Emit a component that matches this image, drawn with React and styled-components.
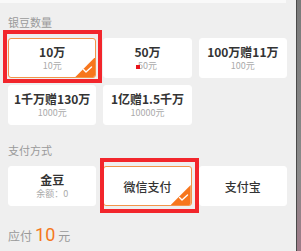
import styled, { createGlobalStyle } from "styled-components"

const GlobalStyle = createGlobalStyle`
  html, body {
    margin: 0;
    padding: 0;
    background: #efefef;
    font-family: "Noto Sans CJK SC", "Noto Sans", sans-serif;
  }
`

const Screen = styled.div`
  display: flex;
  width: 301px;
  height: 251px;
  overflow: hidden;
`
const Page = styled.div`
  width: 297px;
  background: #efefef;
  display: flex;
  flex-direction: column;
`
const Edge = styled.div`
  width: 4px;
  border-left: 1px solid #4a4a4a;
  background: linear-gradient(#7a7a7a, #8a8a8a 70%, #a07a88);
`
const TopCard = styled.div`
  height: 3px;
  margin-right: 10px;
  background: #f9f9f9;
`
const Label = styled.div`
  padding-left: 8px;
  margin-top: ${p => p.top}px;
  font-size: 11px;
  line-height: 14px;
  color: #9a9a9a;
`
const Grid = styled.div`
  display: grid;
  grid-template-columns: repeat(3, 1fr);
  gap: 7px;
  margin: ${p => p.top}px 9px 0 8px;
`
const Cell = styled.div`
  position: relative;
`
const Card = styled.div`
  position: relative;
  height: 40px;
  box-sizing: border-box;
  background: #fff;
  border-radius: 3px;
  border: 1px solid ${p => (p.selected ? "#f3944a" : "#fff")};
  display: flex;
  flex-direction: column;
  align-items: center;
  justify-content: center;
  overflow: hidden;
`
const Title = styled.div`
  font-size: 12px;
  line-height: 15px;
  font-weight: ${p => (p.bold ? 700 : 500)};
  color: #333;
`
const Sub = styled.div`
  font-size: 9px;
  line-height: 12px;
  color: #aaa;
  margin-top: 1px;
`
const Corner = styled.div`
  position: absolute;
  right: 0;
  bottom: 0;
  width: 20px;
  height: 20px;
  background: #f7761d;
  clip-path: polygon(100% 0, 100% 100%, 0 100%);
  display: flex;
  align-items: flex-end;
  justify-content: flex-end;
`
const Highlight = styled.div`
  position: absolute;
  top: ${p => p.t}px;
  left: ${p => p.l}px;
  right: ${p => p.r}px;
  bottom: ${p => p.b}px;
  border: 4px solid #f2262c;
  pointer-events: none;
`
const Speck = styled.div`
  position: absolute;
  left: 33px;
  top: 27px;
  width: 4px;
  height: 4px;
  background: #e8141c;
`
const Total = styled.div`
  margin-top: ${p => p.top}px;
  padding-left: 8px;
  display: flex;
  align-items: baseline;
  gap: 3px;
  font-size: 12px;
  line-height: 20px;
  color: #999;
`
const Amount = styled.span`
  font-size: 18px;
  color: #f5781e;
  font-family: "Roboto", "Noto Sans", sans-serif;
`

function Check() {
  return (
    <Corner>
      <svg width="11" height="9" viewBox="0 0 11 9" style={{ marginRight: 2, marginBottom: 3 }}>
        <polyline points="1.5,4.5 4,7 9.5,2" fill="none" stroke="#fff" strokeWidth="1.4" strokeLinecap="round" strokeLinejoin="round" />
      </svg>
    </Corner>
  )
}

const packs = [
  { title: "10万", price: "10元", selected: true },
  { title: "50万", price: "50元", speck: true },
  { title: "100万赠11万", price: "100元" },
  { title: "1千万赠130万", price: "1000元" },
  { title: "1亿赠1.5千万", price: "10000元" },
]

export default function App() {
  return (
    <Screen>
      <GlobalStyle />
      <Page>
        <TopCard />
        <Label top={12}>银豆数量</Label>
        <Grid top={9}>
          {packs.map(p => (
            <Cell key={p.title}>
              <Card selected={p.selected}>
                <Title bold>{p.title}</Title>
                <Sub>{p.price}</Sub>
                {p.selected ? <Check /> : null}
              </Card>
              {p.speck ? <Speck /> : null}
              {p.selected ? <Highlight t={-8} l={-5} r={-6} b={-5} /> : null}
            </Cell>
          ))}
        </Grid>

        <Label top={18}>支付方式</Label>
        <Grid top={9}>
          <Cell>
            <Card>
              <Title bold>金豆</Title>
              <Sub>余额：0</Sub>
            </Card>
          </Cell>
          <Cell>
            <Card selected>
              <Title>微信支付</Title>
              <Check />
            </Card>
            <Highlight t={-8} l={-3} r={-7} b={-7} />
          </Cell>
          <Cell>
            <Card>
              <Title>支付宝</Title>
            </Card>
          </Cell>
        </Grid>

        <Total top={19}>
          应付 <Amount>10</Amount> 元
        </Total>
      </Page>
      <Edge />
    </Screen>
  )
}
